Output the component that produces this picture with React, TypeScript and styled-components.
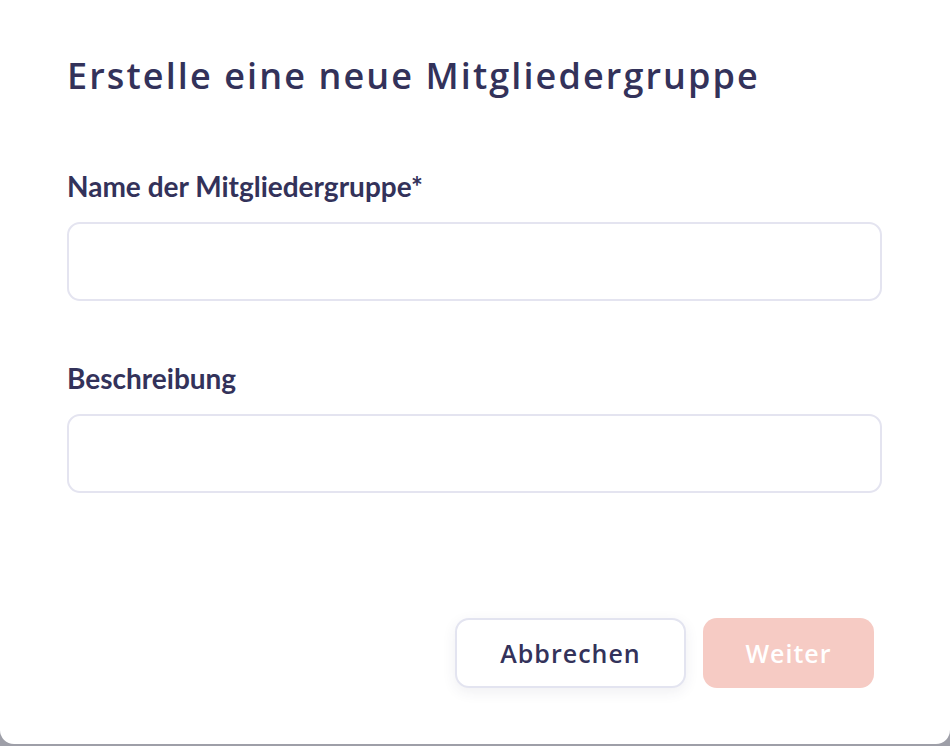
import React from "react";
import styled, { createGlobalStyle } from "styled-components";

const Global = createGlobalStyle`
  html, body { margin: 0; padding: 0; }
  body {
    background: #9e9fa8;
    width: 950px;
    height: 746px;
    overflow: hidden;
  }
  * { box-sizing: border-box; }
`;

const Modal = styled.div`
  width: 950px;
  height: 744px;
  background: #ffffff;
  border-radius: 0 0 14px 14px;
  padding: 52px 68px 56px 67px;
  display: flex;
  flex-direction: column;
`;

const Title = styled.h1`
  margin: 0;
  font-family: "Open Sans", "Noto Sans", sans-serif;
  font-weight: 600;
  font-size: 36px;
  line-height: 48px;
  letter-spacing: 2.1px;
  color: #33325a;
`;

const Field = styled.div<{ $top: number }>`
  display: flex;
  flex-direction: column;
  margin-top: ${(p) => p.$top}px;
`;

const Label = styled.label`
  font-family: Lato, "Liberation Sans", sans-serif;
  font-weight: 700;
  font-size: 28px;
  line-height: 34px;
  color: #33325a;
`;

const Input = styled.input`
  margin-top: 19px;
  height: 79px;
  width: 100%;
  border: 2px solid #e4e4f0;
  border-radius: 13px;
  background: #ffffff;
  outline: none;
  font-family: Lato, sans-serif;
  font-size: 20px;
  padding: 0 20px;
`;

const Footer = styled.div`
  margin-top: auto;
  display: flex;
  justify-content: flex-end;
  gap: 17px;
  padding-right: 8px;
`;

const Button = styled.button<{ $primary?: boolean }>`
  height: 70px;
  width: ${(p) => (p.$primary ? 171 : 231)}px;
  border-radius: 14px;
  font-family: "Open Sans", "Noto Sans", sans-serif;
  font-weight: 600;
  font-size: 25px;
  letter-spacing: 1px;
  cursor: pointer;
  border: ${(p) => (p.$primary ? "none" : "2px solid #e3e4f0")};
  background: ${(p) => (p.$primary ? "#f6cbc4" : "#ffffff")};
  color: ${(p) => (p.$primary ? "#ffffff" : "#33325a")};
  box-shadow: ${(p) => (p.$primary ? "none" : "0 4px 14px rgba(51, 50, 90, 0.08)")};
`;

export default function App() {
  return (
    <>
      <Global />
      <Modal>
        <Title>Erstelle eine neue Mitgliedergruppe</Title>
        <Field $top={69}>
          <Label>Name der Mitgliedergruppe*</Label>
          <Input />
        </Field>
        <Field $top={60}>
          <Label>Beschreibung</Label>
          <Input />
        </Field>
        <Footer>
          <Button>Abbrechen</Button>
          <Button $primary>Weiter</Button>
        </Footer>
      </Modal>
    </>
  );
}
